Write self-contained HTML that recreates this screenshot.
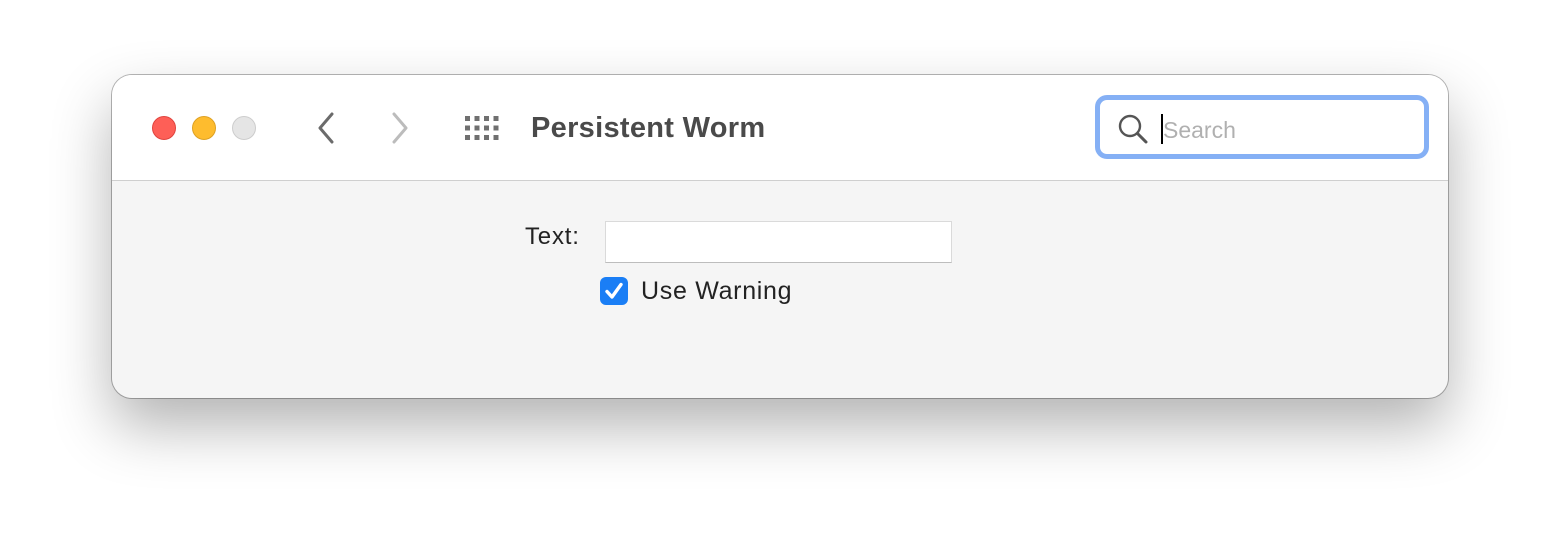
<!DOCTYPE html>
<html><head><style>
body{margin:0;width:1560px;height:546px;background:#fff;position:relative;overflow:hidden;font-family:"Liberation Sans",sans-serif}
.win{position:absolute;left:112px;top:75px;width:1336px;height:323px;border-radius:20px;background:#f5f5f5;box-shadow:0 28px 60px rgba(0,0,0,.30),0 0 0 1px rgba(0,0,0,.28);overflow:hidden}
.tb{position:absolute;left:0;top:0;width:100%;height:105px;background:#fff;border-bottom:1px solid #cfcfcf}
.tl{position:absolute;top:41px;width:24px;height:24px;border-radius:50%;box-sizing:border-box}
.title{position:absolute;left:419px;top:37px;font-size:29px;font-weight:bold;color:#4a4a4a;letter-spacing:.3px}
.search{position:absolute;left:983px;top:20px;width:334px;height:64px;box-sizing:border-box;border:5px solid #85b0f5;border-radius:12px;background:#fff}
.search span{position:absolute;left:63px;top:17px;font-size:23px;color:#b0b0b0}
.caret{position:absolute;left:61px;top:14px;width:2px;height:30px;background:#000}
.lbl{position:absolute;left:413px;top:148px;font-size:24px;color:#222;letter-spacing:.8px}
.inp{position:absolute;left:493px;top:146px;width:347px;height:42px;background:#fff;border:1px solid #dadada;border-bottom-color:#bdbdbd;box-sizing:border-box}
.cb{position:absolute;left:488px;top:202px;width:28px;height:28px;border-radius:6px;background:#1a7ef5}
.cbl{position:absolute;left:529px;top:202px;font-size:25px;color:#222;letter-spacing:.7px}
</style></head><body>
<div class="win">
<div class="tb">
<div class="tl" style="left:40px;background:#fe5f57;border:1px solid #e0443e"></div>
<div class="tl" style="left:80px;background:#febc2e;border:1px solid #dea123"></div>
<div class="tl" style="left:120px;background:#e5e5e5;border:1px solid #cdcdcd"></div>
<svg style="position:absolute;left:200px;top:36px" width="30" height="34"><path d="M20 3 L8 17 L20 31" fill="none" stroke="#6b6b6b" stroke-width="3" stroke-linecap="round" stroke-linejoin="round"/></svg>
<svg style="position:absolute;left:274px;top:36px" width="30" height="34"><path d="M8 3 L20 17 L8 31" fill="none" stroke="#bcbcbc" stroke-width="3" stroke-linecap="round" stroke-linejoin="round"/></svg>
<svg style="position:absolute;left:352px;top:40px" width="40" height="30" fill="#707070">
<rect x="1" y="1" width="5" height="5"/><rect x="10.5" y="1" width="5" height="5"/><rect x="20" y="1" width="5" height="5"/><rect x="29.5" y="1" width="5" height="5"/>
<rect x="1" y="10.5" width="5" height="5"/><rect x="10.5" y="10.5" width="5" height="5"/><rect x="20" y="10.5" width="5" height="5"/><rect x="29.5" y="10.5" width="5" height="5"/>
<rect x="1" y="20" width="5" height="5"/><rect x="10.5" y="20" width="5" height="5"/><rect x="20" y="20" width="5" height="5"/><rect x="29.5" y="20" width="5" height="5"/>
</svg>
<div class="title">Persistent Worm</div>
<div class="search">
<svg style="position:absolute;left:17px;top:13px" width="34" height="34"><circle cx="13" cy="13" r="10" fill="none" stroke="#555" stroke-width="2.4"/><path d="M20.5 20.5 L29 29" stroke="#555" stroke-width="3" stroke-linecap="round"/></svg>
<div class="caret"></div><span>Search</span>
</div>
</div>
<div class="lbl">Text:</div>
<div class="inp"></div>
<div class="cb"><svg width="28" height="28"><path d="M7 14.5 L12 20 L21 7.5" fill="none" stroke="#fff" stroke-width="3.4" stroke-linecap="round" stroke-linejoin="round"/></svg></div>
<div class="cbl">Use Warning</div>
</div>
</body></html>
